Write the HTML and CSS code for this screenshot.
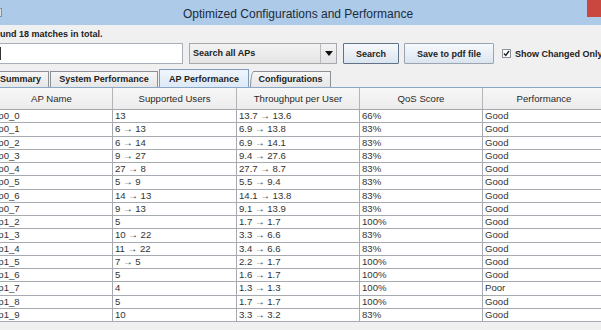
FILE: index.html
```html
<!DOCTYPE html>
<html lang="en">
<head>
    <meta charset="UTF-8">
    <title>Optimized Configurations and Performance</title>
    <link rel="stylesheet" href="styles.css">
</head>
<body>
    <div class="window">
        <div class="titlebar">
            <span class="app-icon"></span>
            <span class="title">Optimized Configurations and Performance</span>
            <span class="close-btn">&#x2715;</span>
        </div>

        <div class="content">
            <div class="status">Found 18 matches in total.</div>

            <div class="toolbar">
                <div class="text-field"><span class="caret"></span></div>
                <div class="combo">
                    <span class="combo-value">Search all APs</span>
                    <span class="combo-arrow">
                        <svg width="8" height="5" viewBox="0 0 8 5"><polygon points="0,0 8,0 4,5" fill="#111"/></svg>
                    </span>
                </div>
                <button class="btn btn-focus">Search</button>
                <button class="btn btn-save">Save to pdf file</button>
                <label class="check">
                    <span class="check-box">
                        <svg width="9" height="9" viewBox="0 0 9 9"><polyline points="2,4.5 3.8,6.5 7,2" fill="none" stroke="#222" stroke-width="1.4"/></svg>
                    </span>
                    Show Changed Only
                </label>
            </div>

            <div class="tabs">
                <div class="tab tab-summary">Summary</div>
                <div class="tab tab-system">System Performance</div>
                <div class="tab tab-ap selected">AP Performance</div>
                <div class="tab tab-config">Configurations</div>
            </div>

            <div class="tab-pane">
                <div class="grid-table">
                    <div class="row head">
                        <div>AP Name</div><div>Supported Users</div><div>Throughput per User</div><div>QoS Score</div><div>Performance</div>
                    </div>
                    <div class="row"><div>ap0_0</div><div>13</div><div>13.7 → 13.6</div><div>66%</div><div>Good</div></div>
                    <div class="row"><div>ap0_1</div><div>6 → 13</div><div>6.9 → 13.8</div><div>83%</div><div>Good</div></div>
                    <div class="row"><div>ap0_2</div><div>6 → 14</div><div>6.9 → 14.1</div><div>83%</div><div>Good</div></div>
                    <div class="row"><div>ap0_3</div><div>9 → 27</div><div>9.4 → 27.6</div><div>83%</div><div>Good</div></div>
                    <div class="row"><div>ap0_4</div><div>27 → 8</div><div>27.7 → 8.7</div><div>83%</div><div>Good</div></div>
                    <div class="row"><div>ap0_5</div><div>5 → 9</div><div>5.5 → 9.4</div><div>83%</div><div>Good</div></div>
                    <div class="row"><div>ap0_6</div><div>14 → 13</div><div>14.1 → 13.8</div><div>83%</div><div>Good</div></div>
                    <div class="row"><div>ap0_7</div><div>9 → 13</div><div>9.1 → 13.9</div><div>83%</div><div>Good</div></div>
                    <div class="row"><div>ap1_2</div><div>5</div><div>1.7 → 1.7</div><div>100%</div><div>Good</div></div>
                    <div class="row"><div>ap1_3</div><div>10 → 22</div><div>3.3 → 6.6</div><div>83%</div><div>Good</div></div>
                    <div class="row"><div>ap1_4</div><div>11 → 22</div><div>3.4 → 6.6</div><div>83%</div><div>Good</div></div>
                    <div class="row"><div>ap1_5</div><div>7 → 5</div><div>2.2 → 1.7</div><div>100%</div><div>Good</div></div>
                    <div class="row"><div>ap1_6</div><div>5</div><div>1.6 → 1.7</div><div>100%</div><div>Good</div></div>
                    <div class="row"><div>ap1_7</div><div>4</div><div>1.3 → 1.3</div><div>100%</div><div>Poor</div></div>
                    <div class="row"><div>ap1_8</div><div>5</div><div>1.7 → 1.7</div><div>100%</div><div>Good</div></div>
                    <div class="row"><div>ap1_9</div><div>10</div><div>3.3 → 3.2</div><div>83%</div><div>Good</div></div>
                </div>
            </div>
        </div>
    </div>
</body>
</html>
```

FILE: styles.css
```css
html, body {
    margin: 0;
    padding: 0;
    overflow: hidden;
}
body {
    width: 601px;
    height: 330px;
    background-color: #f0f0f0;
    font-family: 'Liberation Sans', Arial, sans-serif;
    color: #222;
}
.window {
    margin-left: -15px;
    width: 626px;
}

/* barra de titulo */
.titlebar {
    position: relative;
    height: 25px;
    background-color: #adcae9;
    text-align: center;
    line-height: 25px;
}
.title {
    font-size: 12px;
    color: #1c2a3a;
}
.app-icon {
    position: absolute;
    left: 11px;
    top: 8px;
    width: 6px;
    height: 9px;
    background-color: #d9dde2;
    border: 1px solid #8a9098;
    box-sizing: border-box;
}
.close-btn {
    position: absolute;
    right: -17px;
    top: 0;
    width: 41px;
    height: 17px;
    line-height: 17px;
    background-color: #c9473f;
    color: white;
    font-size: 9px;
    font-weight: bold;
}

.content {
    padding: 3px 0 0 4px;
}
.status {
    font-size: 9px;
    font-weight: bold;
    line-height: 12px;
    height: 12px;
}

/* barra de busqueda */
.toolbar {
    display: flex;
    align-items: center;
    margin-top: 3px;
    height: 21px;
}
.text-field {
    width: 194px;
    height: 21px;
    box-sizing: border-box;
    background-color: white;
    border: 1px solid #a9afb6;
    padding: 3px 0 0 10px;
}
.caret {
    display: block;
    width: 1px;
    height: 13px;
    background-color: #333;
}
.combo {
    display: flex;
    margin-left: 6px;
    width: 148px;
    height: 21px;
    box-sizing: border-box;
    border: 1px solid #a6a9ad;
    background: linear-gradient(#f3f3f3, #e4e4e4);
}
.combo-value {
    flex: 1;
    font-size: 9px;
    font-weight: bold;
    line-height: 19px;
    padding-left: 3px;
}
.combo-arrow {
    width: 15px;
    border-left: 1px solid #b8bbbf;
    display: flex;
    align-items: center;
    justify-content: center;
}
.btn {
    height: 21px;
    box-sizing: border-box;
    border: 1px solid #9aa5b1;
    background: linear-gradient(#f7fafd, #dbe4ee);
    font-family: 'Liberation Sans', Arial, sans-serif;
    font-size: 9px;
    font-weight: bold;
    color: #222;
    padding: 0;
    border-radius: 1px;
}
.btn-focus {
    margin-left: 6px;
    width: 56px;
    border-color: #5f7287;
}
.btn-save {
    margin-left: 5px;
    width: 90px;
}
.check {
    display: flex;
    align-items: center;
    margin-left: 8px;
    font-size: 9px;
    font-weight: bold;
    white-space: nowrap;
}
.check-box {
    display: block;
    width: 9px;
    height: 9px;
    box-sizing: border-box;
    border: 1px solid #8d939a;
    background-color: white;
    margin-right: 4px;
}
.check-box svg {
    display: block;
    margin: -1px;
}

/* pestañas */
.tabs {
    display: flex;
    align-items: flex-end;
    margin-top: 5px;
    height: 18px;
    padding-left: 3px;
}
.tab {
    height: 16px;
    box-sizing: border-box;
    border: 1px solid #8b9097;
    border-bottom: none;
    background: linear-gradient(#f6f6f6, #e6e6e6);
    font-size: 9px;
    font-weight: bold;
    line-height: 15px;
    text-align: center;
}
.tab-summary { width: 57px; }
.tab-system { width: 108px; margin-left: 1px; }
.tab-ap { width: 90px; margin-left: 1px; }
.tab-config { width: 81px; margin-left: 1px; border-top-left-radius: 4px 16px; }
.tab.selected {
    height: 18px;
    line-height: 18px;
    background: linear-gradient(#f1f6fc, #dce9f6);
    border-color: #7f9cba;
}

.tab-pane {
    border-top: 1px solid #89a7c6;
    padding-left: 2px;
}

/* tabla */
.grid-table {
    width: 615px;
}
.row {
    display: grid;
    grid-template-columns: 122px 124px 123px 123px 123px;
    height: 13.25px;
    box-sizing: border-box;
    border-bottom: 1px solid #a7abb1;
    background-color: white;
    font-size: 9.6px;
    line-height: 12px;
    color: #333;
}
.row > div {
    border-right: 1px solid #a7abb1;
    padding-left: 2px;
    white-space: nowrap;
    overflow: hidden;
}
.row.head {
    height: 22px;
    background: linear-gradient(#f7f7f7, #ececec);
    border-bottom: 1px solid #a3a6aa;
    line-height: 21px;
    color: #2a2a2a;
}
.row.head > div {
    text-align: center;
    padding-left: 0;
    border-right-color: #b2b5b9;
}
```
